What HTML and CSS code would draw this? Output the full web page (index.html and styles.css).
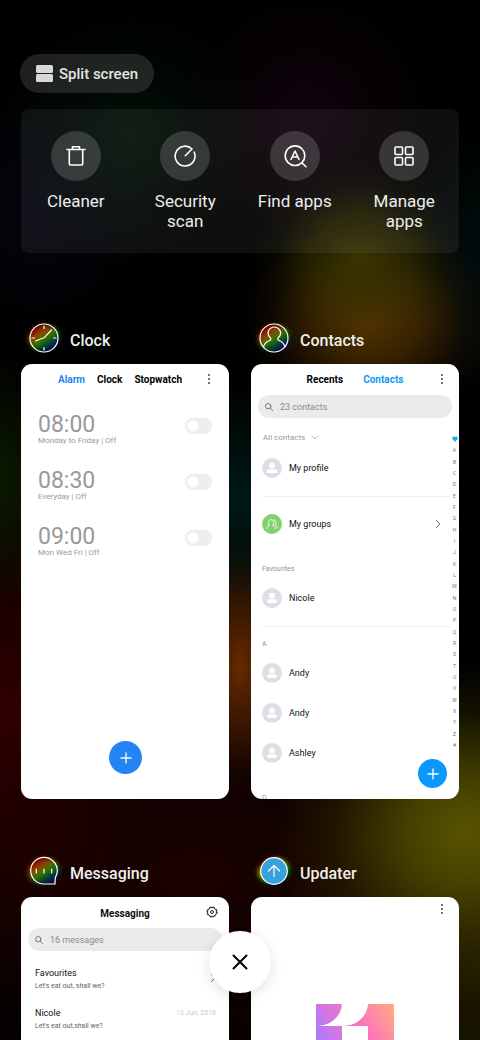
FILE: index.html
```html
<!DOCTYPE html>
<html lang="en">
<head>
	<meta charset="utf-8">
	<meta name="viewport" content="width=device-width, initial-scale=1">
	<title>Recent apps</title>
	<link rel="stylesheet" href="styles.css">
</head>
<body>
	<!-- shared icons -->
	<svg class="sprite" aria-hidden="true">
		<symbol id="dots" viewBox="0 0 4 12"><g fill="#333"><circle cx="2" cy="2" r=".9"/><circle cx="2" cy="6" r=".9"/><circle cx="2" cy="10" r=".9"/></g></symbol>
		<symbol id="search" viewBox="0 0 10 10"><g fill="none" stroke="#777" stroke-linecap="round"><circle cx="4.2" cy="4.2" r="2.7"/><path d="M6.3 6.3 8.7 8.7"/></g></symbol>
		<symbol id="plus" viewBox="0 0 12 12"><path d="M6 .5v11M.5 6h11" fill="none" stroke="#fff" stroke-width="1.3"/></symbol>
		<symbol id="person" viewBox="0 0 20 20"><circle cx="10" cy="10" r="10" fill="#dcdfe6"/><circle cx="10" cy="7.6" r="2.9" fill="#fff"/><rect x="5" y="11.3" width="10" height="3.8" rx="1.9" fill="#fff"/></symbol>
		<symbol id="arrow" viewBox="0 0 6 10"><path d="M1.2 1.2 4.8 5 1.2 8.8" fill="none" stroke="#666"/></symbol>
	</svg>

	<div class="screen">
		<button class="split" type="button">
			<svg width="17" height="17" viewBox="0 0 17 17"><rect width="17" height="8" rx="1.5"/><rect y="9" width="17" height="8" rx="1.5"/></svg>
			Split screen
		</button>

		<nav class="shortcuts">
			<button type="button">
				<span class="disc"><svg viewBox="0 0 24 24"><path d="M3 5.5h18M8.500 5V2.800h7V5M5.300 6v14a1 1 0 0 0 1 1h11.400a1 1 0 0 0 1-1V6"/></svg></span>
				Cleaner
			</button>
			<button type="button">
				<span class="disc"><svg viewBox="0 0 24 24"><path d="M12.3 11.700 19 5A9.900 9.900 0 1 0 21.200 8.200"/></svg></span>
				Security scan
			</button>
			<button type="button">
				<span class="disc"><svg viewBox="0 0 24 24"><circle cx="12" cy="11.7" r="9.8"/><path d="M18.8 18.700 23 22.800M8 15.500 12 7l4 8.500M9.500 13h5"/></svg></span>
				Find apps
			</button>
			<button type="button">
				<span class="disc"><svg viewBox="0 0 24 24"><rect x="3" y="3" width="7.5" height="7.5" rx="1"/><rect x="13.5" y="3" width="7.5" height="7.5" rx="1"/><rect x="3" y="13.5" width="7.5" height="7.5" rx="1"/><rect x="13.5" y="13.5" width="7.5" height="7.5" rx="1"/></svg></span>
				Manage apps
			</button>
		</nav>

		<main class="apps">
			<section class="app">
				<h2><span class="logo"><svg viewBox="0 0 30 30"><circle cx="15" cy="15" r="14"/><path d="M15 3v2.500M15 24.500v2.500M3 15h2.500M24.500 15h2.500M6.500 18 15 14.800 22.500 7"/></svg></span>Clock</h2>
				<div class="card clock">
					<header>
						<div class="tabs">
							<button class="on" type="button">Alarm</button>
							<button type="button">Clock</button>
							<button type="button">Stopwatch</button>
						</div>
						<button class="menu" type="button" aria-label="More"><svg width="4" height="12"><use href="#dots"/></svg></button>
					</header>
					<ul class="alarms">
						<li><label for="alarm1"><b>08:00</b><small>Monday to Friday | Off</small></label><input type="checkbox" id="alarm1"></li>
						<li><label for="alarm2"><b>08:30</b><small>Everyday | Off</small></label><input type="checkbox" id="alarm2"></li>
						<li><label for="alarm3"><b>09:00</b><small>Mon Wed Fri | Off</small></label><input type="checkbox" id="alarm3"></li>
					</ul>
					<button class="add" type="button" aria-label="Add alarm"><svg width="12" height="12"><use href="#plus"/></svg></button>
				</div>
			</section>

			<section class="app">
				<h2><span class="logo"><svg viewBox="0 0 30 30"><circle cx="15" cy="15" r="14"/><path d="M4.500 24c.8-3.500 2.500-5 5-6 2.500-.9 3-1.800 1.800-3.300A6 6 0 0 1 9 10.300a6.300 6.300 0 0 1 12.600 0c0 2-1 3.300-2.300 4.400-1.200 1.500-.7 2.400 1.800 3.300 2.500 1 4 2.500 4.700 6"/></svg></span>Contacts</h2>
				<div class="card contacts">
					<header>
						<div class="tabs">
							<button type="button">Recents</button>
							<button class="on" type="button">Contacts</button>
						</div>
						<button class="menu" type="button" aria-label="More"><svg width="4" height="12"><use href="#dots"/></svg></button>
					</header>
					<label class="search"><svg width="10" height="10"><use href="#search"/></svg><input type="text" placeholder="23 contacts" aria-label="Search contacts"></label>
					<div class="book">
						<div class="people">
							<button class="filter" type="button">All contacts <svg width="8" height="5" viewBox="0 0 8 5"><path d="M.5.5 4 4 7.500.5" fill="none" stroke="#aaa" stroke-width=".8"/></svg></button>
							<a class="person" href="#"><svg width="20" height="20"><use href="#person"/></svg>My profile</a>
							<hr>
							<a class="person" href="#">
								<svg width="20" height="20" viewBox="0 0 20 20"><circle cx="10" cy="10" r="10" fill="#86cf70"/><path d="M4.800 14.500c.2-2 1.300-2.600 2.500-3.100-2-2.800-.8-5.700 1.700-5.700s3.700 2.900 1.700 5.700c1.200.5 2.300 1.100 2.500 3.100M11.500 6c2.300-.3 3.300 2.500 1.500 4.800 1.200.4 2 1.200 2.200 3" fill="none" stroke="#fff" stroke-width=".9" stroke-linecap="round"/></svg>
								My groups
								<svg class="next" width="6" height="10"><use href="#arrow"/></svg>
							</a>
							<h3>Favourites</h3>
							<a class="person" href="#"><svg width="20" height="20"><use href="#person"/></svg>Nicole</a>
							<hr>
							<h3>A</h3>
							<a class="person" href="#"><svg width="20" height="20"><use href="#person"/></svg>Andy</a>
							<a class="person" href="#"><svg width="20" height="20"><use href="#person"/></svg>Andy</a>
							<a class="person" href="#"><svg width="20" height="20"><use href="#person"/></svg>Ashley</a>
							<h3>D</h3>
						</div>
						<div class="index">
							<svg width="6" height="6" viewBox="0 0 6 6"><path d="M3 5.700.5 3.200C-.8 1.500 1.500-.5 3 1c1.500-1.500 3.800.5 2.500 2.200z" fill="#1cb0f0"/></svg>
							<span>A</span><span>B</span><span>C</span><span>D</span><span>E</span><span>F</span><span>G</span><span>H</span><span>I</span><span>J</span><span>K</span><span>L</span><span>M</span><span>N</span><span>O</span><span>P</span><span>Q</span><span>R</span><span>S</span><span>T</span><span>U</span><span>V</span><span>W</span><span>X</span><span>Y</span><span>Z</span><span>#</span>
						</div>
					</div>
					<button class="add" type="button" aria-label="Add contact"><svg width="12" height="12"><use href="#plus"/></svg></button>
				</div>
			</section>

			<section class="app">
				<h2><span class="logo"><svg viewBox="0 0 30 30"><path d="M26 28H15A13.300 13.300 0 1 1 28.300 15c0 2.500-.7 4-1.500 5.500-.8 1.500-.8 4-.8 7.500zM7.300 13v4M15 13v4M22.700 13v4"/></svg></span>Messaging</h2>
				<div class="card messaging">
					<header>
						<h3>Messaging</h3>
						<button class="menu" type="button" aria-label="Settings"><svg width="12" height="12" viewBox="0 0 12 12"><g fill="none" stroke="#222"><circle cx="6" cy="6" r="4.5"/><circle cx="6" cy="6" r="5.2" stroke-dasharray="2.4 1.68" stroke-width=".8"/><circle cx="6" cy="6" r="1.5"/></g></svg></button>
					</header>
					<label class="search"><svg width="10" height="10"><use href="#search"/></svg><input type="text" placeholder="16 messages" aria-label="Search messages"></label>
					<ul class="threads">
						<li><div><b>Favourites</b><svg width="6" height="10"><use href="#arrow"/></svg></div><p>Let's eat out, shall we?</p></li>
						<li><div><b>Nicole</b><time>13 Jun, 2016</time></div><p>Let's eat out,shall we?</p></li>
					</ul>
				</div>
			</section>

			<section class="app">
				<h2><span class="logo blue"><svg viewBox="0 0 30 30"><circle cx="15" cy="15" r="13.3" fill="#36a3dc"/><path d="M15 20.500V10M9.500 15 15 9.500l5.500 5.500"/></svg></span>Updater</h2>
				<div class="card updater">
					<header>
						<button class="menu" type="button" aria-label="More"><svg width="4" height="12"><use href="#dots"/></svg></button>
					</header>
					<svg class="version" width="78" height="78" viewBox="0 0 78 78">
						<linearGradient id="candy" x1="0" y1=".6" x2="1" y2="0"><stop offset="0" stop-color="#9d7dff"/><stop offset=".25" stop-color="#c877ea"/><stop offset=".6" stop-color="#fd76b8"/><stop offset="1" stop-color="#ffac80"/></linearGradient>
						<path fill="url(#candy)" d="M0 0H26C25 12 16 21 2 22H26V78H0zM52 0H78V78H52V22H28C42 21 51 12 52 0z"/>
					</svg>
				</div>
			</section>
		</main>

		<button class="close" type="button" aria-label="Close all"><svg width="16" height="16" viewBox="0 0 16 16"><path d="M1.500 1.500 14.500 14.500M14.500 1.500 1.500 14.500" fill="none" stroke="#000" stroke-width="2" stroke-linecap="round"/></svg></button>
	</div>
</body>
</html>
```

FILE: styles.css
```css
* {
	box-sizing: border-box;
}
body {
	margin: 0;
	background: #000;
	font-family: Roboto, "Noto Sans", sans-serif;
	color: #111;
}
button {
	border: 0;
	padding: 0;
	background: none;
	font: inherit;
	color: inherit;
	cursor: pointer;
}
h2, h3, p, ul {
	margin: 0;
	padding: 0;
	list-style: none;
}
a {
	color: inherit;
	text-decoration: none;
}
svg {
	display: block;
	flex: none;
}
.sprite {
	position: absolute;
	width: 0;
	height: 0;
}

/* blurred wallpaper */
.screen {
	position: relative;
	height: 100vh;
	overflow: hidden;
	padding: 54px 21px 0;
	background:
		radial-gradient(ellipse 110px 100px at 75% 25%, rgba(60, 56, 0, .9), rgba(60, 56, 0, .5) 45%, rgba(60, 56, 0, .12) 75%, transparent),
		radial-gradient(ellipse 130px 100px at 77% 31%, rgba(88, 52, 0, .95), rgba(88, 52, 0, .6) 40%, rgba(80, 48, 0, .15) 75%, transparent),
		radial-gradient(ellipse 190px 170px at 97% 80%, rgba(92, 88, 0, .95), rgba(92, 88, 0, .7) 30%, rgba(92, 88, 0, .2) 70%, transparent),
		radial-gradient(ellipse 60px 130px at 50% 64%, rgba(108, 44, 0, .95), rgba(108, 44, 0, .5) 45%, rgba(108, 44, 0, .1) 80%, transparent),
		radial-gradient(ellipse 60px 120px at 50% 48%, #001a17, transparent),
		radial-gradient(ellipse 60px 130px at 0% 46%, #0a1a00, transparent),
		radial-gradient(ellipse 160px 280px at 0% 68%, rgba(52, 0, 0, .9), rgba(52, 0, 0, .4) 50%, transparent),
		radial-gradient(ellipse 130px 130px at 27% 13%, rgba(3, 24, 10, .7), rgba(3, 24, 10, .3) 50%, transparent),
		radial-gradient(ellipse 130px 130px at 64% 11%, rgba(24, 4, 18, .7), rgba(24, 4, 18, .3) 50%, transparent),
		radial-gradient(ellipse 90px 140px at 100% 25%, rgba(0, 18, 18, .7), transparent),
		radial-gradient(ellipse 120px 140px at 8% 20%, rgba(6, 6, 20, .7), transparent),
		radial-gradient(ellipse 420px 240px at 40% 84%, rgba(34, 2, 0, .8), rgba(24, 2, 0, .5) 50%, transparent),
		radial-gradient(ellipse 250px 240px at 100% 93%, rgba(34, 31, 0, .9), transparent),
		#000;
}

.split {
	display: flex;
	align-items: center;
	gap: 6px;
	height: 39px;
	padding: 0 16px;
	margin-left: -1px;
	border-radius: 20px;
	background: rgba(255, 255, 255, .12);
	font-size: 15px;
	font-weight: 500;
	color: #e4e4e4;
}
.split svg {
	fill: #d8d8d8;
}

.shortcuts {
	display: grid;
	grid-template-columns: repeat(4, 1fr);
	align-items: start;
	height: 144px;
	margin-top: 16px;
	padding-top: 22px;
	border-radius: 8px;
	background: rgba(255, 255, 255, .06);
}
.shortcuts button {
	display: flex;
	flex-direction: column;
	align-items: center;
	gap: 10px;
	padding: 0 12px;
	font-size: 17px;
	line-height: 20px;
	color: #eee;
}
.disc {
	display: grid;
	place-items: center;
	width: 50px;
	height: 50px;
	border-radius: 50%;
	background: rgba(255, 255, 255, .16);
}
.disc svg {
	width: 24px;
	height: 24px;
	fill: none;
	stroke: #fff;
	stroke-width: 1.6;
	stroke-linecap: round;
	stroke-linejoin: round;
}

.apps {
	display: grid;
	grid-template-columns: 1fr 1fr;
	gap: 54px 22px;
	margin-top: 67px;
}
.app {
	min-width: 0;
}
.app h2 {
	display: flex;
	align-items: flex-start;
	gap: 11px;
	height: 44px;
	padding: 3px 0 0 8px;
	font-size: 16px;
	font-weight: 500;
	line-height: 36px;
	color: #eee;
}
.logo {
	position: relative;
	width: 30px;
	height: 30px;
}
.logo svg {
	position: relative;
	width: 30px;
	height: 30px;
	fill: none;
	stroke: #fff;
	stroke-width: 1.2;
	stroke-linecap: round;
	stroke-linejoin: round;
}
.logo::before {
	content: "";
	position: absolute;
	inset: 2px -1px;
	border-radius: 50%;
	background: linear-gradient(155deg, #900 15%, #8a4a00 35%, #2c7a00 55%, #00531a 65%, #0a0a80 85%);
	transform: rotate(-8deg);
	filter: blur(2px);
}
.blue::before {
	background: conic-gradient(#e33000, #d8b000 40deg, #008a00 90deg, #000a50 150deg, #000050 200deg, #00a000 230deg, #c8b000 270deg, #600 310deg, #e33000);
}

.card {
	position: relative;
	height: 435px;
	overflow: hidden;
	border-radius: 11px;
	background: #fff;
}
.card header {
	display: flex;
	align-items: center;
	justify-content: center;
	height: 31px;
	padding-top: 1px;
}
.tabs {
	display: flex;
	gap: 12px;
	font-size: 10px;
	font-weight: 700;
	line-height: 14px;
	color: #000;
}
.clock .tabs {
	margin-right: 10px;
}
.clock .on {
	color: #2483f8;
}
.contacts .tabs {
	gap: 20px;
}
.contacts .on {
	color: #0d99fb;
}
.menu {
	position: absolute;
	top: 9px;
	right: 13px;
	padding: 0 2px;
}
.clock .menu {
	right: 16px;
}
.updater .menu {
	top: 6px;
}

.alarms {
	padding: 18px 17px 0;
}
.alarms li {
	display: flex;
	align-items: flex-start;
	justify-content: space-between;
	height: 56px;
}
.alarms b,
.alarms small {
	display: block;
	color: #999;
}
.alarms b {
	font-size: 23px;
	font-weight: 400;
	line-height: 23px;
}
.alarms small {
	font-size: 8px;
	line-height: 10px;
}
.alarms input {
	appearance: none;
	width: 27px;
	height: 16px;
	margin: 5px 0 0;
	border-radius: 8px;
	background: radial-gradient(circle at 8px 8px, #fff 5px, #eee 6px);
}

.add {
	position: absolute;
	display: grid;
	place-items: center;
	width: 33px;
	height: 33px;
	border-radius: 50%;
}
.clock .add {
	bottom: 25px;
	left: calc(50% - 16px);
	background: #2483f5;
}
.contacts .add {
	right: 12px;
	bottom: 11px;
	width: 29px;
	height: 29px;
	background: #0b98fc;
}

.search {
	display: flex;
	align-items: center;
	gap: 6px;
	height: 23px;
	margin: 0 7px;
	padding: 0 6px;
	border-radius: 12px;
	background: #ebebeb;
}
.search input {
	flex: 1;
	min-width: 0;
	border: 0;
	padding: 0;
	background: none;
	font: 9px/12px Roboto, "Noto Sans", sans-serif;
}
.search input::placeholder {
	color: #8a8a8a;
	opacity: 1;
}

.book {
	display: flex;
	padding-top: 11px;
}
.people {
	flex: 1;
	padding-left: 11px;
	font-size: 9px;
}
.filter {
	display: flex;
	align-items: center;
	gap: 6px;
	height: 16px;
	margin-bottom: 3px;
	padding-left: 1px;
	font-size: 8px;
	color: #999;
}
.person {
	display: flex;
	align-items: center;
	gap: 7px;
	height: 40px;
}
.next {
	margin: 0 9px 0 auto;
}
.people hr {
	height: 1px;
	margin: 8px 0 7px 1px;
	border: 0;
	background: #eee;
}
.people h3 {
	margin: 20px 0 4px;
	font-size: 7px;
	font-weight: 400;
	line-height: 10px;
	color: #8d93a8;
}
.people hr + h3 {
	margin-top: 12px;
}
.index {
	display: flex;
	flex-direction: column;
	align-items: center;
	justify-content: space-between;
	width: 9px;
	height: 312px;
	margin-top: 7px;
	font-size: 5px;
	line-height: 6px;
	color: #777;
}

.messaging h3 {
	font-size: 10px;
	font-weight: 700;
}
.messaging .menu {
	right: 9px;
}
.threads {
	padding: 16px 13px 0 14px;
}
.threads li {
	height: 40px;
}
.threads div {
	display: flex;
	justify-content: space-between;
	font-size: 9px;
	line-height: 12px;
}
.threads div svg {
	margin-top: 6px;
}
.threads b {
	font-weight: 400;
}
.threads li {
	position: relative;
}
.threads div {
	height: 13px;
}
.threads p,
.threads time {
	font-size: 7px;
	line-height: 12px;
	color: #666;
}
.threads time {
	color: #ccc;
}

.version {
	margin: 76px auto 0;
}

.close {
	position: absolute;
	bottom: 47px;
	left: calc(50% - 31px);
	display: grid;
	place-items: center;
	width: 62px;
	height: 62px;
	border-radius: 50%;
	background: #fff;
	box-shadow: 0 3px 14px rgba(0, 0, 0, .12);
}
```
